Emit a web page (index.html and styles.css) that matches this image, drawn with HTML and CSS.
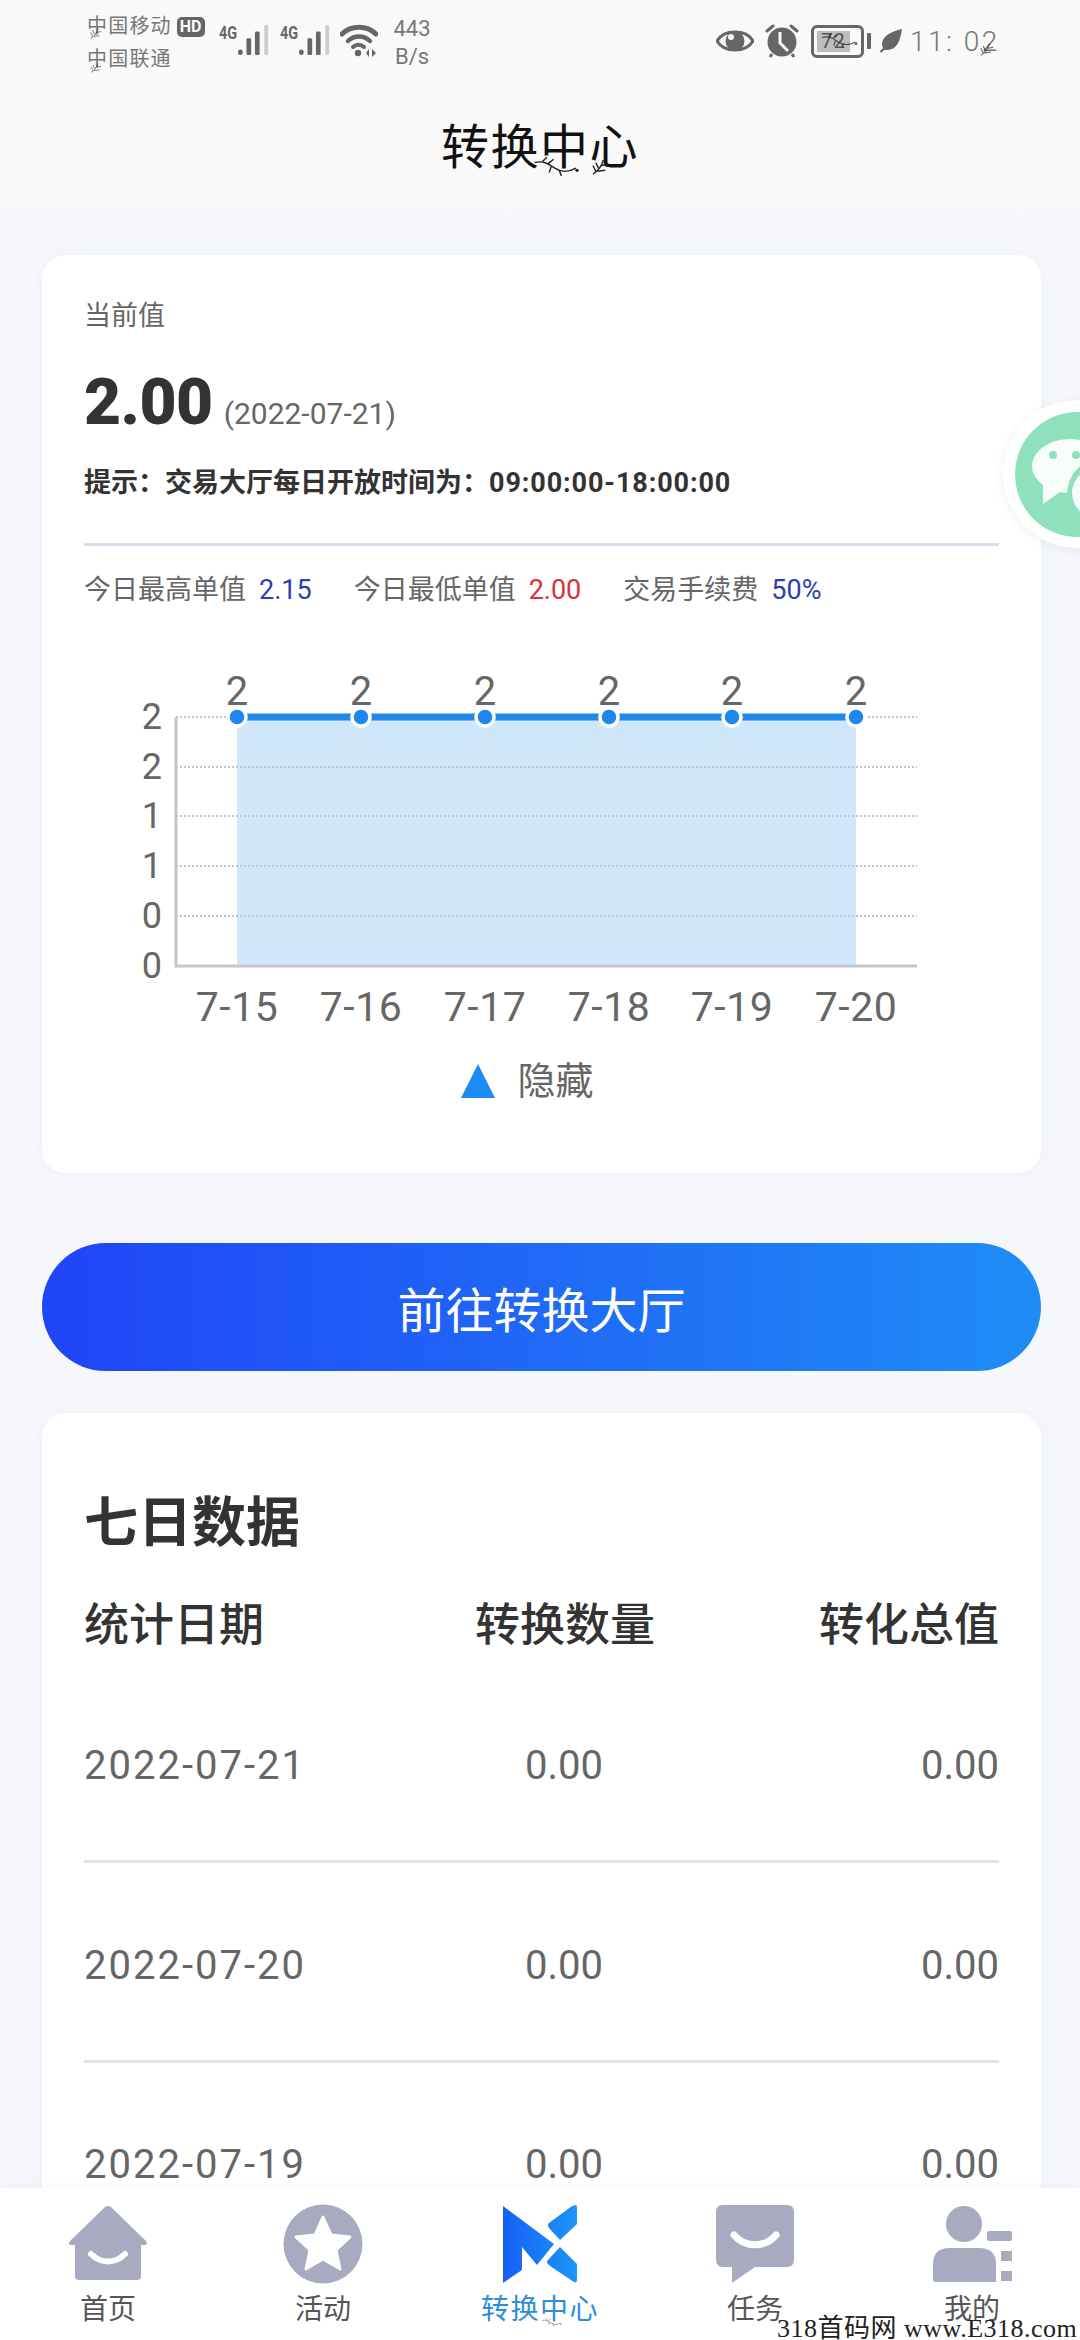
FILE: index.html
```html
<!DOCTYPE html>
<html lang="zh-CN">
<head>
<meta charset="utf-8">
<title>转换中心</title>
<link rel="stylesheet" href="styles.css">
</head>
<body>
<svg class="defs" width="0" height="0"><defs>
  <symbol id="vine" viewBox="0 0 40 18"><path d="M0 5 C8 3 12 6 18 10 C24 14 30 14 37 10 M7 4 L11 0 M12 6 L17 2 M15 8 L13 14 M22 12 L24 17" fill="none" stroke="#222" stroke-width="1.300"/><circle cx="38" cy="12" r="1.500" fill="#222"/></symbol>
  <symbol id="sprig" viewBox="0 0 18 18"><path d="M1 17 C6 14 10 10 12 2 M4 14 L1 8 M7 11 L4 5 M6 14 L14 13 M10 8 L17 7" fill="none" stroke="#222" stroke-width="1.500"/></symbol>
</defs></svg>
<div class="page">
  <div class="status">
    <div class="carriers">
      <div class="carrier">中国移动<span class="hd">HD</span></div>
      <div class="carrier">中国联通</div>
    </div>
    <div class="sig"><span class="sig-t">4G</span>
      <svg class="sig-b" width="34" height="32" viewBox="0 0 34 34"><rect x="0" y="26" width="5" height="6" rx="2.5" fill="#666"/><rect x="9" y="14" width="5" height="18" rx="1.5" fill="#666"/><rect x="18" y="7" width="5" height="25" rx="1.5" fill="#666"/><rect x="28" y="0" width="4" height="32" rx="1.5" fill="#ccc"/></svg>
    </div>
    <div class="sig"><span class="sig-t">4G</span>
      <svg class="sig-b" width="34" height="32" viewBox="0 0 34 34"><rect x="0" y="26" width="5" height="6" rx="2.5" fill="#666"/><rect x="9" y="14" width="5" height="18" rx="1.5" fill="#666"/><rect x="18" y="7" width="5" height="25" rx="1.5" fill="#666"/><rect x="28" y="0" width="4" height="32" rx="1.5" fill="#ccc"/></svg>
    </div>
    <svg class="wifi" width="38" height="34" viewBox="0 0 38 34"><path d="M2 10 C11 1 27 1 36 10" fill="none" stroke="#666" stroke-width="5" stroke-linecap="round"/><path d="M8 17 C14 11 24 11 30 17" fill="none" stroke="#666" stroke-width="4.500" stroke-linecap="round"/><path d="M13 23 C16 20 21 20 24 23" fill="none" stroke="#666" stroke-width="4" stroke-linecap="round"/><circle cx="18" cy="29" r="3.200" fill="#666"/><path d="M29 25 L26 29 L29 33Z M32 25 L36 29 L32 33Z" fill="#666"/></svg>
    <div class="speed"><div>443</div><div>B/s</div></div>
    <div class="status-right">
      <svg width="38" height="26" viewBox="0 0 38 26"><path d="M1 13 C8 1 30 1 37 13 C30 25 8 25 1 13Z" fill="none" stroke="#666" stroke-width="3"/><circle cx="19" cy="13" r="9.500" fill="#666"/><circle cx="15" cy="9" r="3" fill="#f9f9f9"/></svg>
      <svg width="34" height="34" viewBox="0 0 34 34"><circle cx="17" cy="18" r="14.500" fill="#666"/><path d="M2 7 L8 2 M32 7 L26 2" stroke="#666" stroke-width="3" stroke-linecap="round"/><path d="M15 8 L15 19 L23 27" fill="none" stroke="#f9f9f9" stroke-width="3"/><path d="M7 30 L5 33 M27 30 L29 33" stroke="#666" stroke-width="3"/></svg>
      <div class="battery"><div class="batt-body"><div class="batt-fill">72</div></div><div class="batt-tip"></div></div>
      <svg width="22" height="24" viewBox="0 0 22 24"><path d="M22 0 C20 14 16 22 4 21 L1 24 L0 22 L3 19 C-1 10 8 3 22 0Z" fill="#666"/></svg>
      <div class="clock">11: 02</div>
    </div>
  </div>

  <header class="title-bar"><h1 class="title">转换中心</h1></header>

  <main class="content">
    <section class="card card-top">
      <div class="cur-label">当前值</div>
      <div class="cur-line"><span class="cur-value">2.00</span><span class="cur-date">(2022-07-21)</span></div>
      <div class="tip">提示：交易大厅每日开放时间为：<span class="tip-time">09:00:00-18:00:00</span></div>
      <div class="stats">
        <div class="stat">今日最高单值<span class="val blue">2.15</span></div>
        <div class="stat">今日最低单值<span class="val red">2.00</span></div>
        <div class="stat">交易手续费<span class="val blue">50%</span></div>
      </div>
      <svg class="chart" width="915" height="372" viewBox="84 660 915 372">
        <rect class="area" x="237" y="718" width="619" height="249"/>
        <g class="grid">
          <line x1="176" y1="718" x2="917" y2="718"/>
          <line x1="176" y1="768" x2="917" y2="768"/>
          <line x1="176" y1="817" x2="917" y2="817"/>
          <line x1="176" y1="867" x2="917" y2="867"/>
          <line x1="176" y1="917" x2="917" y2="917"/>
        </g>
        <path class="axis" d="M176 718 V967 H917"/>
        <line class="line" x1="237" y1="718" x2="856" y2="718"/>
        <g class="pts">
          <circle cx="237" cy="718" r="9"/><circle cx="361" cy="718" r="9"/><circle cx="485" cy="718" r="9"/>
          <circle cx="609" cy="718" r="9"/><circle cx="732" cy="718" r="9"/><circle cx="856" cy="718" r="9"/>
        </g>
        <g class="t-top">
          <text x="237" y="706">2</text><text x="361" y="706">2</text><text x="485" y="706">2</text>
          <text x="609" y="706">2</text><text x="732" y="706">2</text><text x="856" y="706">2</text>
        </g>
        <g class="t-y">
          <text x="162" y="730">2</text><text x="162" y="780">2</text><text x="162" y="829">1</text>
          <text x="162" y="879">1</text><text x="162" y="929">0</text><text x="162" y="979">0</text>
        </g>
        <g class="t-x">
          <text x="237" y="1022">7-15</text><text x="361" y="1022">7-16</text><text x="485" y="1022">7-17</text>
          <text x="609" y="1022">7-18</text><text x="732" y="1022">7-19</text><text x="856" y="1022">7-20</text>
        </g>
      </svg>
      <div class="legend"><span class="tri"></span><span>隐藏</span></div>
    </section>

    <button class="cta">前往转换大厅</button>

    <section class="card card-data">
      <h2 class="data-title">七日数据</h2>
      <div class="data-row data-head"><span>统计日期</span><span>转换数量</span><span>转化总值</span></div>
      <div class="data-row data-item"><span class="date">2022-07-21</span><span>0.00</span><span>0.00</span></div>
      <div class="data-row data-item"><span class="date">2022-07-20</span><span>0.00</span><span>0.00</span></div>
      <div class="data-row data-item"><span class="date">2022-07-19</span><span>0.00</span><span>0.00</span></div>
    </section>
  </main>

  <div class="float-wx">
    <svg width="125" height="125" viewBox="0 0 125 125">
      <circle cx="62.500" cy="62.500" r="62.500" fill="#8fe0bc"/>
      <ellipse cx="55" cy="54" rx="38" ry="27" fill="#fff" opacity=".93"/>
      <path d="M28 72 L28 92 L48 78Z" fill="#fff" opacity=".93"/>
      <circle cx="38" cy="43" r="4" fill="#8fe0bc"/><circle cx="61" cy="43" r="4" fill="#8fe0bc"/>
      <circle cx="88" cy="82" r="36" fill="#8fe0bc"/>
      <ellipse cx="90" cy="81" rx="33" ry="28" fill="#fff" opacity=".93"/>
    </svg>
  </div>

  <nav class="tabs">
    <div class="tab">
      <svg class="tab-ic" width="80" height="80" viewBox="0 0 80 80"><path d="M40 2 C42 2 43 3 44 4 L78 37 C80 39 79 41 76 41 L73 41 V72 C73 75 71 76 69 76 H11 C9 76 7 75 7 72 V41 L4 41 C1 41 0 39 2 37 L36 4 C37 3 38 2 40 2Z" fill="#a8abbf"/><path d="M23 50 C33 60 47 60 57 50" fill="none" stroke="#fff" stroke-width="6" stroke-linecap="round"/></svg>
      <span>首页</span>
    </div>
    <div class="tab">
      <svg class="tab-ic" width="80" height="80" viewBox="0 0 80 80"><circle cx="40" cy="40" r="39.500" fill="#a8abbf"/><path d="M40 13 L48 31 L67 33 L53 46 L57 65 L40 55 L23 65 L27 46 L13 33 L32 31Z" fill="#fff" stroke="#fff" stroke-width="3" stroke-linejoin="round"/></svg>
      <span>活动</span>
    </div>
    <div class="tab tab-on">
      <svg class="tab-ic" width="80" height="80" viewBox="0 0 80 80"><defs><linearGradient id="lg" x1="0" y1="0" x2="1" y2="0"><stop offset="0" stop-color="#1560f5"/><stop offset="1" stop-color="#1e95f8"/></linearGradient></defs><path d="M3 2 L54 40 L37 61 L22 43 V66 L3 79Z M76 1 Q77 1 77 4 V20 L60 36 L49 24 Q47 21 49 19 L72 2Z M48 60 Q46 58 48 56 L60 43 L77 60 V76 Q77 79 74 78 L50 62Z" fill="url(#lg)"/></svg>
      <span>转换中心</span>
    </div>
    <div class="tab">
      <svg class="tab-ic" width="80" height="80" viewBox="0 0 80 80"><path d="M8 1 H72 Q79 1 79 8 V55 Q79 63 72 63 H40 L17 79 V63 H8 Q1 63 1 55 V8 Q1 1 8 1Z" fill="#a8abbf"/><path d="M19 31 C30 44 50 44 61 31" fill="none" stroke="#fff" stroke-width="7" stroke-linecap="round"/></svg>
      <span>任务</span>
    </div>
    <div class="tab">
      <svg class="tab-ic" width="80" height="80" viewBox="0 0 80 80"><circle cx="32" cy="20" r="18" fill="#a8abbf"/><path d="M1 60 Q1 44 18 44 H47 Q64 44 64 60 V78 H4 Q1 78 1 75Z" fill="#a8abbf"/><rect x="55" y="27" width="25" height="10" rx="2" fill="#a8abbf"/><rect x="69" y="47" width="11" height="10" fill="#a8abbf"/><rect x="69" y="67" width="11" height="10" fill="#a8abbf"/></svg>
      <span>我的</span>
    </div>
  </nav>

  <svg class="orn orn-t1"><use href="#vine"/></svg>
  <svg class="orn orn-t2"><use href="#sprig"/></svg>
  <svg class="orn orn-c1"><use href="#sprig"/></svg>
  <svg class="orn orn-c2"><use href="#sprig"/></svg>
  <svg class="orn orn-b"><use href="#vine"/></svg>
  <svg class="orn orn-k"><use href="#sprig"/></svg>
  <svg class="orn orn-n1"><use href="#vine"/></svg>

  <div class="watermark">318首码网 www.E318.com</div>
</div>
</body>
</html>
```
FILE: styles.css
```css
* { box-sizing: border-box; }
html, body { margin: 0; padding: 0; }
body { background: #f5f7fb; font-family: Roboto, "Noto Sans CJK SC", sans-serif; color: #333; }
.defs { position: absolute; }
.page { position: relative; width: 1080px; height: 2340px; overflow: hidden; background: linear-gradient(#f9f9f9 0, #f9f9f9 180px, #f5f7fb 230px); }

.status { height: 78px; padding: 12px 0 0 87px; display: flex; align-items: flex-start; color: #777; }
.carriers { width: 122px; margin-top: -2px; font-size: 20px; line-height: 33px; }
.carrier { display: flex; align-items: center; height: 33px; letter-spacing: 1.200px; }
.hd { margin-left: 5px; background: #666; color: #f9f9f9; font-size: 16px; font-weight: 700; line-height: 20px; height: 20px; padding: 0 3px; border-radius: 5px; letter-spacing: 0; }
.sig { width: 61px; height: 46px; position: relative; }
.sig-t { position: absolute; left: 10px; top: 11px; font: 700 18px/20px Roboto, sans-serif; color: #666; transform: scaleX(.8); transform-origin: left; }
.sig-b { position: absolute; left: 28px; top: 13px; }
.wifi { margin: 12px 0 0 9px; }
.speed { margin: 3px 0 0 12px; width: 44px; text-align: center; font-size: 22px; line-height: 28px; color: #777; }
.status-right { margin-left: 282px; display: flex; align-items: center; height: 58px; gap: 9px; color: #666; }
.status-right svg:first-child { margin-right: 2px; }
.battery { display: flex; align-items: center; margin-left: 3px; }
.batt-body { width: 53px; height: 33px; border: 3px solid #666; border-radius: 6px; padding: 3px; }
.batt-fill { width: 33px; height: 21px; background: #bdbdbd; font-size: 20px; line-height: 21px; text-align: center; color: #555; letter-spacing: 1px; }
.batt-tip { width: 4px; height: 16px; background: #666; margin-left: 3px; border-radius: 1px; }
.clock { font-size: 28px; font-weight: 300; color: #777; letter-spacing: 2.500px; margin-left: -1px; }

.title-bar { height: 132px; display: flex; justify-content: center; align-items: flex-start; padding-top: 40px; }
.title { margin: 0; font-size: 48px; line-height: 60px; font-weight: 400; color: #111; letter-spacing: 1.500px; }

.content { padding: 45px 39px 0 42px; display: flex; flex-direction: column; }
.card { background: #fff; border-radius: 24px; padding: 0 42px; box-shadow: 0 0 12px rgba(220, 226, 240, .35); }
.card-top { height: 918px; padding-top: 44px; }
.cur-label { font-size: 27px; line-height: 34px; color: #666; }
.cur-line { display: flex; align-items: baseline; margin-top: 32px; height: 76px; }
.cur-value { font-size: 64px; line-height: 76px; font-weight: 900; color: #333; letter-spacing: -.5px; }
.cur-date { margin-left: 11px; font-size: 30px; color: #666; }
.tip { margin-top: 23px; font-size: 27px; line-height: 38px; font-weight: 700; color: #333; padding-bottom: 41px; border-bottom: 3px solid #dcdcec; white-space: nowrap; }
.tip-time { letter-spacing: .9px; }
.stats { display: flex; gap: 42px; margin-top: 25px; font-size: 27px; line-height: 38px; color: #666; }
.stat { display: flex; }
.val { margin-left: 13px; }
.blue { color: #2b3fb5; }
.red { color: #d5333a; }

.chart { display: block; margin-top: 50px; }
.area { fill: #d0e6fb; }
.grid line { stroke: #c4c4c4; stroke-width: 2; stroke-dasharray: 2 2; }
.axis { fill: none; stroke: #c6c6c6; stroke-width: 3; }
.line { stroke: #1f88e8; stroke-width: 7; }
.pts circle { fill: #1c87ee; stroke: #fff; stroke-width: 3.500; }
.chart text { font-family: Roboto, sans-serif; fill: #666; }
.t-top text { font-size: 40px; text-anchor: middle; }
.t-x text { font-size: 41px; text-anchor: middle; letter-spacing: .5px; }
.t-y text { font-size: 36px; text-anchor: end; }

.legend { display: flex; align-items: center; justify-content: center; gap: 22px; margin-top: 25px; padding-right: 28px; font-size: 38px; line-height: 50px; color: #666; }
.tri { width: 0; height: 0; border-left: 17px solid transparent; border-right: 17px solid transparent; border-bottom: 34px solid #1c8cf5; }

.cta { display: block; margin: 70px 0 0; width: 999px; height: 128px; border: 0; border-radius: 64px; background: linear-gradient(90deg, #2044f7, #1f8df6); color: #fff; font-family: inherit; font-size: 48px; }

.card-data { margin-top: 42px; height: 1000px; padding-top: 77px; }
.data-title { margin: 0; font-size: 54px; line-height: 68px; font-weight: 700; color: #333; }
.data-row { display: grid; grid-template-columns: 391px 178px 1fr; }
.data-row span:nth-child(2) { text-align: center; }
.data-row span:last-child { text-align: right; }
.data-head { margin-top: 34px; font-size: 45px; line-height: 68px; font-weight: 500; color: #333; white-space: nowrap; }
.data-item { height: 200px; padding-top: 8px; align-items: center; font-size: 40px; color: #666; border-bottom: 3px solid #e1e1e8; }
.data-item:last-child { padding-top: 6px; }
.data-head + .data-item { margin-top: 3px; }
.date { letter-spacing: 2px; }

.float-wx { position: absolute; left: 1003px; top: 400px; width: 148px; height: 148px; padding: 12px; border-radius: 50%; background: #fff; box-shadow: 0 2px 10px rgba(180, 190, 200, .25); }
.float-wx svg { display: block; }

.tabs { position: absolute; left: 0; right: 0; bottom: 0; height: 152px; background: #fff; box-shadow: 0 -2px 8px rgba(220, 226, 240, .2); display: grid; grid-template-columns: 108px 215px 217px 215px 217px 108px; }
.tab { display: flex; flex-direction: column; align-items: center; grid-row: 1; width: 160px; padding-top: 16px; font-size: 28px; line-height: 40px; color: #555; }
.tab-ic { display: block; margin-bottom: 6px; }
.tab:nth-child(1) { grid-column: 1 / 2; margin-left: 28px; }
.tab:nth-child(2) { grid-column: 2 / 3; margin-left: 135px; }
.tab:nth-child(3) { grid-column: 3 / 4; margin-left: 137px; }
.tab:nth-child(4) { grid-column: 4 / 5; margin-left: 135px; }
.tab:nth-child(5) { grid-column: 5 / 6; margin-left: 137px; }
.tab-on { color: #2a8ddc; letter-spacing: 1.500px; }

.orn { position: absolute; overflow: visible; }
.orn-t1 { left: 534px; top: 157px; width: 46px; height: 20px; }
.orn-t2 { left: 592px; top: 158px; width: 17px; height: 17px; }
.orn-c1 { left: 88px; top: 27px; width: 16px; height: 12px; opacity: .6; }
.orn-c2 { left: 88px; top: 62px; width: 16px; height: 11px; opacity: .6; }
.orn-b { left: 821px; top: 33px; width: 38px; height: 16px; opacity: .75; }
.orn-k { left: 979px; top: 42px; width: 16px; height: 14px; opacity: .65; }
.orn-n1 { left: 540px; top: 2318px; width: 24px; height: 9px; opacity: .6; }

.watermark { position: absolute; left: 777px; top: 2311px; font-family: "Liberation Serif", "Noto Sans CJK SC", serif; font-size: 26px; line-height: 36px; color: #222; letter-spacing: .5px; white-space: nowrap; }
```
